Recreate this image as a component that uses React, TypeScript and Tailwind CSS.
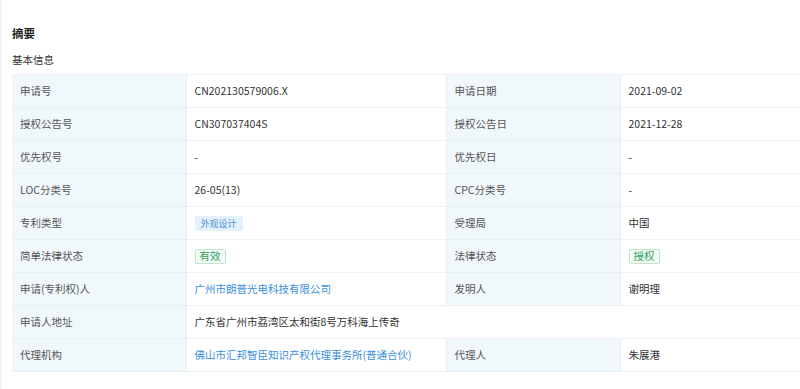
const font = { fontFamily: '"Noto Sans CJK SC", "Noto Sans", sans-serif' };

type Cell = { text: string; kind?: 'link' | 'blueTag' | 'greenTag' };

interface Row {
  label: string;
  value: Cell;
  label2?: string;
  value2?: Cell;
}

const rows: Row[] = [
  { label: '申请号', value: { text: 'CN202130579006.X' }, label2: '申请日期', value2: { text: '2021-09-02' } },
  { label: '授权公告号', value: { text: 'CN307037404S' }, label2: '授权公告日', value2: { text: '2021-12-28' } },
  { label: '优先权号', value: { text: '-' }, label2: '优先权日', value2: { text: '-' } },
  { label: 'LOC分类号', value: { text: '26-05(13)' }, label2: 'CPC分类号', value2: { text: '-' } },
  { label: '专利类型', value: { text: '外观设计', kind: 'blueTag' }, label2: '受理局', value2: { text: '中国' } },
  { label: '简单法律状态', value: { text: '有效', kind: 'greenTag' }, label2: '法律状态', value2: { text: '授权', kind: 'greenTag' } },
  { label: '申请(专利权)人', value: { text: '广州市朗普光电科技有限公司', kind: 'link' }, label2: '发明人', value2: { text: '谢明理' } },
  { label: '申请人地址', value: { text: '广东省广州市荔湾区太和街8号万科海上传奇' } },
  { label: '代理机构', value: { text: '佛山市汇邦智臣知识产权代理事务所(普通合伙)', kind: 'link' }, label2: '代理人', value2: { text: '朱展港' } },
];

const CellValue = ({ cell }: { cell: Cell }) => {
  if (cell.kind === 'link') return <span className="text-[#3a8ee0]">{cell.text}</span>;
  if (cell.kind === 'blueTag')
    return (
      <span className="inline-flex h-[15px] items-center rounded-[2px] bg-[#e4f1fc] px-[6px] text-[9px] text-[#4a8fd6]">
        {cell.text}
      </span>
    );
  if (cell.kind === 'greenTag')
    return (
      <span className="inline-flex h-[15px] items-center rounded-[2px] border border-[#bfe5cb] bg-[#f4fbf6] px-[4px] text-[10.5px] text-[#2ea25a]">
        {cell.text}
      </span>
    );
  return <span className="text-[#333333]">{cell.text}</span>;
};

const labelCls = 'h-[33px] w-[174px] border-b border-r border-[#e8eff5] bg-[#f1f8fc] px-2 text-left font-normal text-[#555555]';
const valueCls = 'h-[33px] border-b border-[#eef2f5] px-2 text-left';

export default function App() {
  return (
    <div className="h-[389px] w-[800px] overflow-hidden border-l-2 border-[#f3f3f3] bg-white text-[10.5px]" style={font}>
      <div className="pl-[10px] pt-[24px]">
        <h2 className="h-[18px] text-[11.5px] font-bold leading-[18px] text-[#222222]">摘要</h2>
        <div className="mt-[9px] h-[18px] leading-[18px] text-[#333333]">基本信息</div>
        <table className="mt-[5px] w-[790px] table-fixed border-collapse border-t border-[#eef2f5]">
          <colgroup>
            <col className="w-[174px]" />
            <col className="w-[260px]" />
            <col className="w-[174px]" />
            <col />
          </colgroup>
          <tbody>
            {rows.map((r) => (
              <tr key={r.label}>
                <th className={labelCls}>{r.label}</th>
                {r.label2 ? (
                  <>
                    <td className={valueCls}>
                      <CellValue cell={r.value} />
                    </td>
                    <th className={labelCls + ' border-l'}>{r.label2}</th>
                    <td className={valueCls}>{r.value2 && <CellValue cell={r.value2} />}</td>
                  </>
                ) : (
                  <td className={valueCls} colSpan={3}>
                    <CellValue cell={r.value} />
                  </td>
                )}
              </tr>
            ))}
          </tbody>
        </table>
      </div>
    </div>
  );
}
